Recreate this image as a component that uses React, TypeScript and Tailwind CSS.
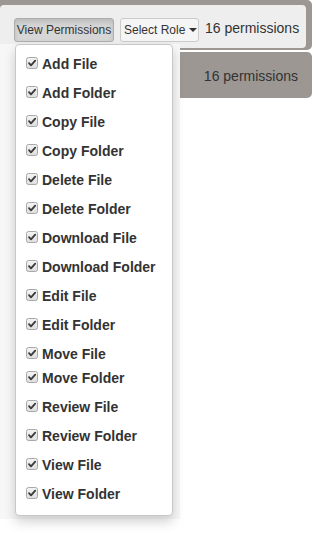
import React from "react";

const items: { label: string; h: number }[] = [
  { label: "Add File", h: 29 },
  { label: "Add Folder", h: 29 },
  { label: "Copy File", h: 29 },
  { label: "Copy Folder", h: 29 },
  { label: "Delete File", h: 29 },
  { label: "Delete Folder", h: 29 },
  { label: "Download File", h: 29 },
  { label: "Download Folder", h: 29 },
  { label: "Edit File", h: 29 },
  { label: "Edit Folder", h: 29 },
  { label: "Move File", h: 24 },
  { label: "Move Folder", h: 29 },
  { label: "Review File", h: 29 },
  { label: "Review Folder", h: 29 },
  { label: "View File", h: 29 },
  { label: "View Folder", h: 29 },
];

function Check() {
  return (
    <svg width="12" height="12" viewBox="0 0 12 12" className="shrink-0">
      <defs>
        <linearGradient id="cbg" x1="0" y1="0" x2="0" y2="1">
          <stop offset="0" stopColor="#f4f4f4" />
          <stop offset="1" stopColor="#dedede" />
        </linearGradient>
      </defs>
      <rect x="0.5" y="0.5" width="11" height="11" rx="2" fill="url(#cbg)" stroke="#a8a8a8" />
      <path d="M3 6.2 L5 8.4 L9.2 3.6" fill="none" stroke="#3a3a3a" strokeWidth="1.8" strokeLinecap="round" strokeLinejoin="round" />
    </svg>
  );
}

export default function App() {
  return (
    <div
      className="relative w-[318px] h-[533px] bg-white text-[#333]"
      style={{ fontFamily: '"Liberation Sans", Arial, sans-serif' }}
    >
      <div className="flex flex-col gap-[2px] w-[312px]">
        <div className="h-[50px] bg-[#9c9792] rounded-r-[5px] pt-[5px] pr-[6px] pb-[2px]">
          <div className="h-[43px] bg-[#eeeeee] rounded-[4px] flex items-start pl-[14px] pt-[13px]">
            <div className="h-[24px] w-[100px] flex items-center justify-center whitespace-nowrap border border-[#adadad] bg-[#d6d6d6] rounded-[3px] text-[12px] shadow-[inset_0_3px_5px_rgba(0,0,0,0.125)]">
              View Permissions
            </div>
            <div className="ml-[6px] h-[24px] w-[79px] flex items-center whitespace-nowrap pl-[3px] border border-[#cccccc] bg-[#f5f5f5] rounded-[3px] text-[12px]">
              <span>Select Role</span>
              <span className="ml-[4px] w-0 h-0 border-t-[4px] border-t-[#333] border-x-[4px] border-x-transparent"></span>
            </div>
            <span className="ml-[6px] text-[14px] leading-[16px] whitespace-nowrap mt-[2px]">16 permissions</span>
          </div>
        </div>
        <div className="h-[46px] bg-[#9c9792] rounded-r-[5px] flex items-center justify-end pr-[14px]">
          <span className="text-[14px] pt-[2px]">16 permissions</span>
        </div>
      </div>

      <div className="absolute left-0 top-[44px] w-[180px] h-[475px] bg-[#f7f7f7]"></div>

      <div className="absolute left-[15px] top-[44px] w-[158px] h-[472px] bg-white border border-[#c8c8c8] rounded-[4px] shadow-[0_6px_12px_rgba(0,0,0,0.175)] pt-[6px] pb-[5px] pl-[10px]">
        {items.map((it) => (
          <div key={it.label} className="flex items-start" style={{ height: it.h }}>
            <div className="flex items-center gap-[4px] pt-[5px] h-[21px]">
              <div className="-mt-[2px]">
                <Check />
              </div>
              <span className="text-[14px] font-bold leading-[16px]">{it.label}</span>
            </div>
          </div>
        ))}
      </div>
    </div>
  );
}
